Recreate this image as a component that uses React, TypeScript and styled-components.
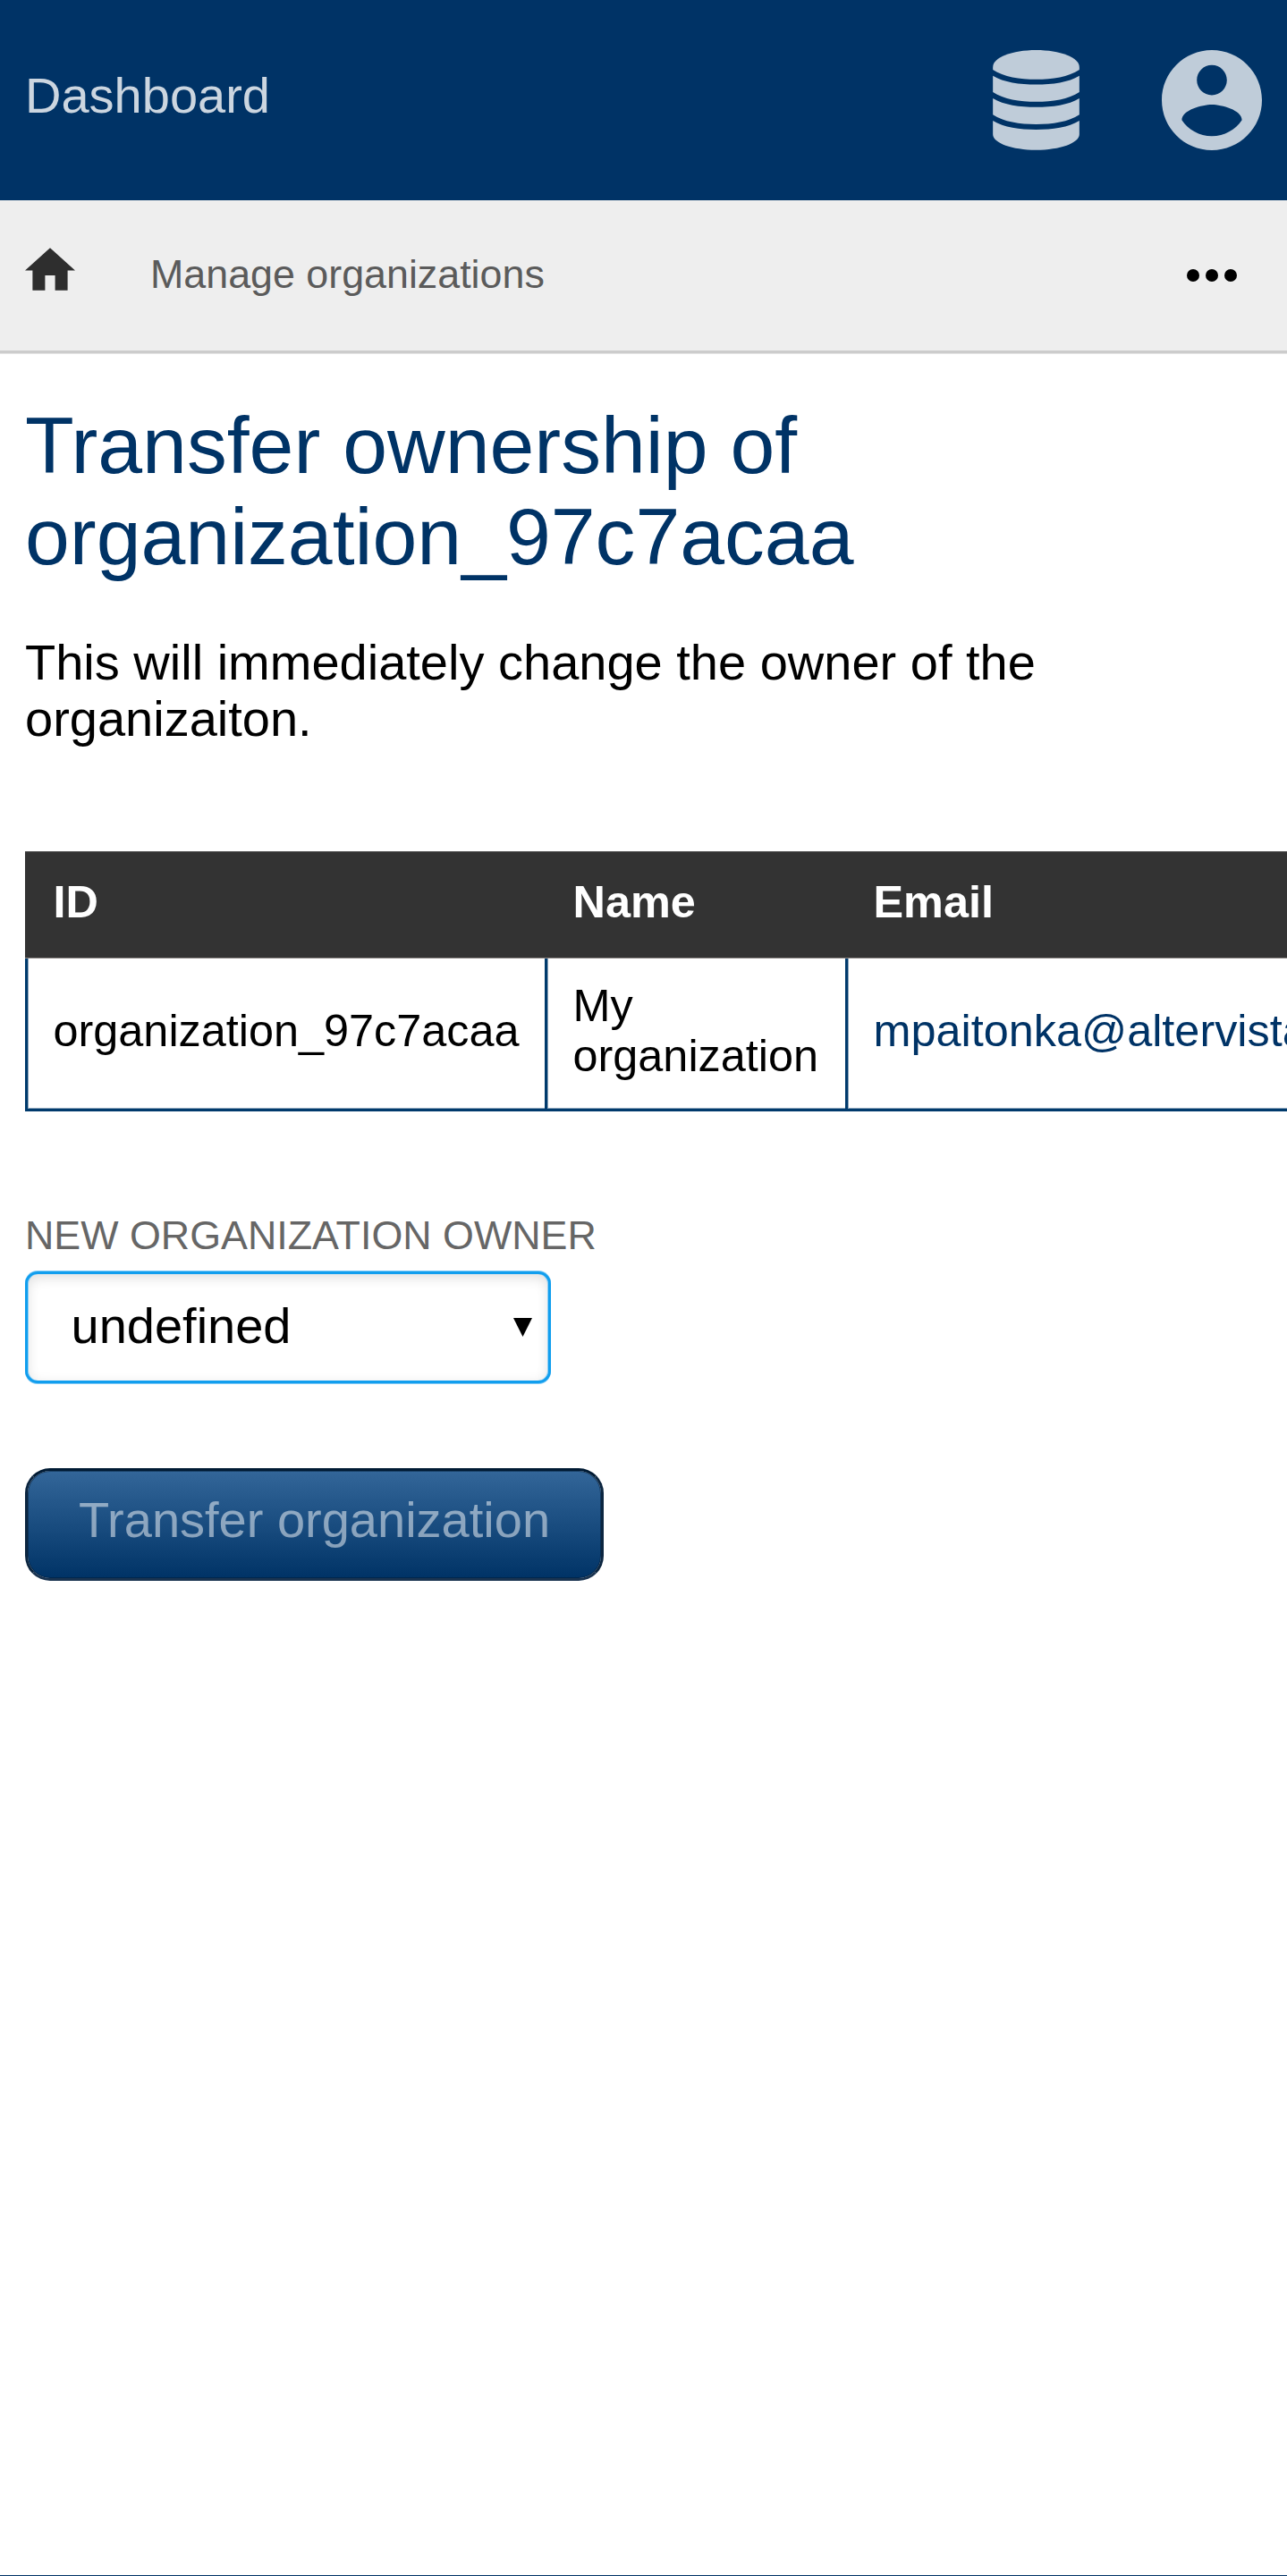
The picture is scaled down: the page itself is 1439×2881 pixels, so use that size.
import React from "react";
import styled, { createGlobalStyle } from "styled-components";

const GlobalStyle = createGlobalStyle`
  html, body { margin: 0; padding: 0; background: #fff; }
  body { overflow: hidden; }
  *, *::before, *::after { box-sizing: border-box; }
`;

const Page = styled.div`
  display: flex;
  flex-direction: column;
  height: 2881px;
  overflow: hidden;
  border-bottom: 1px solid #003366;
  background: #fff;
  color: #000;
  font-family: "Liberation Sans", Arial, sans-serif;
  font-size: 56px;
  line-height: 63px;
`;

const Header = styled.header`
  display: flex;
  flex: none;
  justify-content: space-between;
  height: 224px;
  padding: 56px 28px;
  background: #003366;
`;

const Brand = styled.a`
  padding-top: 19px;
  color: #ccd6e0;
`;

const HeaderIcons = styled.div`
  display: flex;
  gap: 92px;
  color: #bfccd9;
`;

const NavBar = styled.nav`
  display: flex;
  flex: none;
  align-items: center;
  height: 171px;
  padding: 0 56px 0 28px;
  background: #eee;
  border-bottom: 3px solid #ccc;
  box-shadow: 0 1px 0 #e4e4e4;
`;

const HomeLink = styled.a`
  display: flex;
  padding-bottom: 14px;
  color: #2e2e2e;
`;

const NavLink = styled.a`
  margin-left: 84px;
  padding-bottom: 3px;
  font-size: 44.8px;
  line-height: 51px;
  color: #5b5b5b;
`;

const MoreButton = styled.div`
  display: flex;
  gap: 7px;
  margin-left: auto;
`;

const Dot = styled.span`
  width: 14px;
  height: 14px;
  border-radius: 50%;
  background: #000;
`;

const Main = styled.main`
  display: flex;
  flex-direction: column;
  align-items: flex-start;
  padding: 52px 0 0 28px;
`;

const Title = styled.h1`
  max-width: 1100px;
  margin: 0 0 58px;
  font-size: 89.6px;
  font-weight: 400;
  line-height: 102px;
  color: #003366;
`;

const Intro = styled.p`
  max-width: 1383px;
  margin: 0 0 117px;
`;

const Table = styled.table`
  flex: none;
  width: 1700px;
  margin-bottom: 113px;
  table-layout: fixed;
  border-collapse: separate;
  border-spacing: 0;
  font-size: 50.4px;
  line-height: 56px;
`;

const Col = styled.col<{ $width: number }>`
  width: ${(p) => p.$width}px;
`;

const HeadCell = styled.th`
  height: 120px;
  padding: 0 28px 6px 31.5px;
  background: #333;
  box-shadow: inset 0 1px 0 #555, inset 0 -1px 0 #8c8785;
  color: #fff;
  font-weight: 700;
  text-align: left;
`;

const Cell = styled.td`
  height: 171px;
  padding: 0 27px 7px 28.5px;
  border: solid #003a6c;
  border-width: 0 0 3px 3px;
  box-shadow: inset 1px -1px 0 #8da5bb;
`;

const MailLink = styled.a`
  color: #003366;
`;

const Label = styled.label`
  margin-bottom: 15px;
  font-size: 44.8px;
  line-height: 51px;
  color: #666;
  text-transform: uppercase;
`;

const SelectBox = styled.div`
  display: flex;
  align-items: center;
  justify-content: space-between;
  width: 588px;
  height: 125px;
  margin-bottom: 95px;
  padding: 0 18px 5px 48.5px;
  border: 3px solid #119eee;
  border-radius: 14px;
  background: #fff;
  box-shadow: 0 1px 0 #7cc8f5, 0 -1px 0 #7cc8f5, inset 1px 0 0 #8ccff6,
    inset -1px 0 0 #8ccff6, inset 0 4px 14px rgba(0, 0, 0, 0.13);
`;

const SubmitButton = styled.button`
  width: 647px;
  height: 126px;
  padding: 0 0 11px;
  border: 3px solid;
  border-color: #001a33 #0c2640 #193350 #0c2640;
  border-radius: 28px;
  background: linear-gradient(#336699, #003366) padding-box;
  box-shadow: inset 0 0 0 1px rgba(0, 26, 51, 0.5);
  color: rgba(255, 255, 255, 0.5);
  font: inherit;
`;

const DatabaseIcon = () => (
  <svg width="97" height="112" viewBox="150 108 290 336" fill="currentColor">
    <path d="M150 165C150 133 215 108 295 108S440 133 440 165V174C404 198 350 206.500 295 206.500S186 198 150 174Z" />
    <path d="M150 194C186 216 240 223.500 295 223.500S404 216 440 194V249C404 273 350 281.500 295 281.500S186 273 150 249Z" />
    <path d="M150 270C186 292 240 299.500 295 299.500S404 292 440 270V325C404 349 350 357 295 357S186 349 150 325Z" />
    <path d="M150 345C186 367 240 375 295 375S404 367 440 345V391C440 420 375 443.500 295 443.500S150 420 150 391Z" />
  </svg>
);

const AccountIcon = () => (
  <svg width="112" height="112" viewBox="2 2 20 20" fill="currentColor">
    <path d="M12 2C6.480 2 2 6.480 2 12s4.480 10 10 10 10-4.480 10-10S17.520 2 12 2zm0 3c1.660 0 3 1.340 3 3s-1.340 3-3 3-3-1.340-3-3 1.340-3 3-3zm0 14.200c-2.500 0-4.710-1.280-6-3.220.030-1.990 4-3.080 6-3.080 1.990 0 5.970 1.090 6 3.080-1.290 1.940-3.500 3.220-6 3.220z" />
  </svg>
);

const HomeIcon = () => (
  <svg width="56" height="48" viewBox="2 3 20 17" fill="currentColor">
    <path d="M10 20v-6h4v6h5v-8h3L12 3 2 12h3v8z" />
  </svg>
);

const CaretIcon = styled.svg`
  margin-top: 5px;
`;

const Caret = () => (
  <CaretIcon width="21" height="21" viewBox="0 0 21 21">
    <path d="M0 0H21L10.500 21Z" />
  </CaretIcon>
);

const organization = {
  id: "organization_97c7acaa",
  name: "My organization",
  email: "mpaitonka@altervista.org",
};

export default function App() {
  return (
    <>
      <GlobalStyle />
      <Page>
        <Header>
          <Brand>Dashboard</Brand>
          <HeaderIcons>
            <DatabaseIcon />
            <AccountIcon />
          </HeaderIcons>
        </Header>
        <NavBar>
          <HomeLink>
            <HomeIcon />
          </HomeLink>
          <NavLink>Manage organizations</NavLink>
          <MoreButton>
            <Dot />
            <Dot />
            <Dot />
          </MoreButton>
        </NavBar>
        <Main>
          <Title>Transfer ownership of {organization.id}</Title>
          <Intro>This will immediately change the owner of the organizaiton.</Intro>
          <Table>
            <colgroup>
              <Col $width={581} />
              <Col $width={336} />
              <Col $width={783} />
            </colgroup>
            <thead>
              <tr>
                <HeadCell>ID</HeadCell>
                <HeadCell>Name</HeadCell>
                <HeadCell>Email</HeadCell>
              </tr>
            </thead>
            <tbody>
              <tr>
                <Cell>{organization.id}</Cell>
                <Cell>{organization.name}</Cell>
                <Cell>
                  <MailLink>{organization.email}</MailLink>
                </Cell>
              </tr>
            </tbody>
          </Table>
          <Label>New organization owner</Label>
          <SelectBox>
            undefined
            <Caret />
          </SelectBox>
          <SubmitButton disabled>Transfer organization</SubmitButton>
        </Main>
      </Page>
    </>
  );
}
